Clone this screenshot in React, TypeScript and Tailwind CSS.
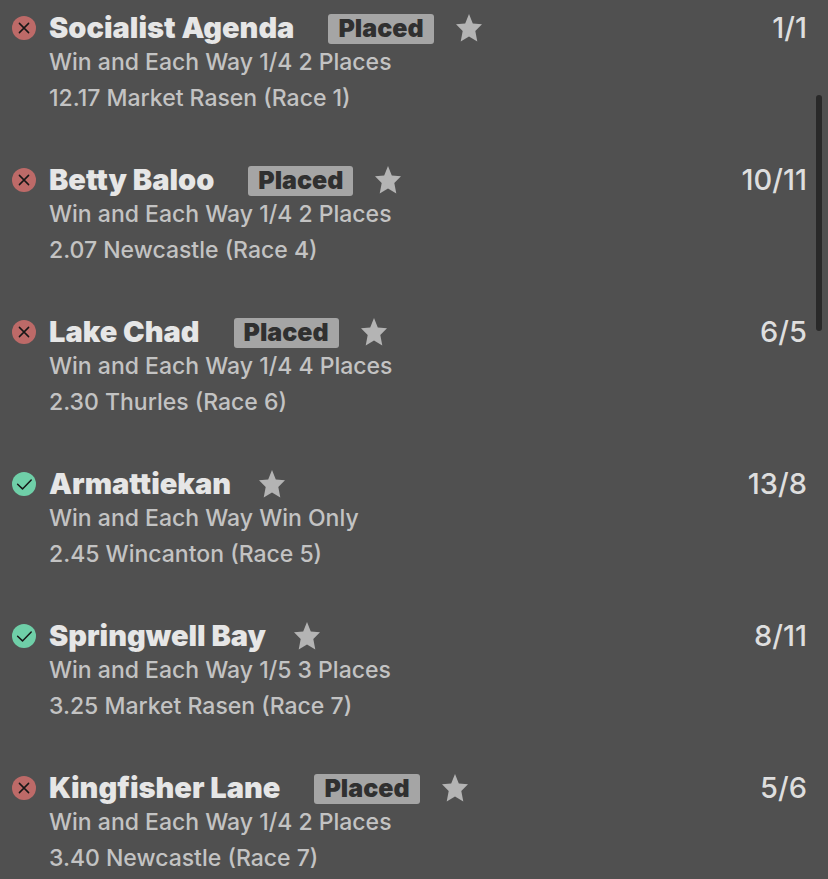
interface Selection {
  name: string;
  market: string;
  event: string;
  odds: string;
  result: "won" | "placed";
}

const SELECTIONS: Selection[] = [
  { name: "Socialist Agenda", market: "Win and Each Way 1/4 2 Places", event: "12.17 Market Rasen (Race 1)", odds: "1/1", result: "placed" },
  { name: "Betty Baloo", market: "Win and Each Way 1/4 2 Places", event: "2.07 Newcastle (Race 4)", odds: "10/11", result: "placed" },
  { name: "Lake Chad", market: "Win and Each Way 1/4 4 Places", event: "2.30 Thurles (Race 6)", odds: "6/5", result: "placed" },
  { name: "Armattiekan", market: "Win and Each Way Win Only", event: "2.45 Wincanton (Race 5)", odds: "13/8", result: "won" },
  { name: "Springwell Bay", market: "Win and Each Way 1/5 3 Places", event: "3.25 Market Rasen (Race 7)", odds: "8/11", result: "won" },
  { name: "Kingfisher Lane", market: "Win and Each Way 1/4 2 Places", event: "3.40 Newcastle (Race 7)", odds: "5/6", result: "placed" },
];

function StatusIcon({ won }: { won: boolean }) {
  return (
    <svg viewBox="0 0 24 24" className="size-6 shrink-0" fill="none" aria-hidden="true">
      <circle cx="12" cy="12" r="12" className={won ? "fill-[#6fcfa8]" : "fill-[#bd6a68]"} />
      <path
        d={won ? "M5.6 12.3l4.9 4.6 8.7-8.9" : "M7.4 7.4l9.2 9.2M16.6 7.4l-9.2 9.2"}
        stroke="#171717"
        strokeWidth={1.5}
        strokeLinecap="round"
        strokeLinejoin="round"
      />
    </svg>
  );
}

function Star() {
  return (
    <svg viewBox="0 0 26 28" className="h-7 w-[26px] shrink-0 fill-[#b4b4b4]" aria-hidden="true">
      <path d="M13 0l3.8 9.4 9.2.8-6.7 6.8 2 10.6L13 22.4l-8.3 5.2 2-10.6L0 10.2l9.2-.8z" />
    </svg>
  );
}

function SelectionRow({ name, market, event, odds, result }: Selection) {
  const won = result === "won";
  return (
    <li className="pr-[21px] pb-12 pl-3">
      <div className="flex h-9 items-center">
        <StatusIcon won={won} />
        <h2 className="ml-[13px] text-[29px] font-black text-[#e6e6e6]">{name}</h2>
        {!won && (
          <span className="mt-[2px] ml-[34px] flex h-[30px] items-center rounded-[3px] bg-[#a5a5a5] px-[10px] text-[25px] font-black text-[#303030]">
            Placed
          </span>
        )}
        <span className={won ? "ml-[28px]" : "ml-[22px]"}>
          <Star />
        </span>
        <span className="ml-auto text-[29px] font-medium text-[#dedede]">{odds}</span>
      </div>
      <p className="ml-[37px] text-[23px] leading-8 font-medium text-[#c3c3c3]">{market}</p>
      <p className="mt-1 ml-[37px] text-[23px] leading-8 font-medium text-[#c3c3c3]">{event}</p>
    </li>
  );
}

export default function App() {
  return (
    <main className="relative min-h-screen overflow-hidden bg-[#505050] font-['Inter',sans-serif]">
      <ul className="pt-[10px]">
        {SELECTIONS.map((selection) => (
          <SelectionRow key={selection.name} {...selection} />
        ))}
      </ul>
      {/* Scroll thumb */}
      <div className="absolute top-[95px] right-[6px] h-[236px] w-[6px] rounded-full bg-[#292929]" />
    </main>
  );
}
